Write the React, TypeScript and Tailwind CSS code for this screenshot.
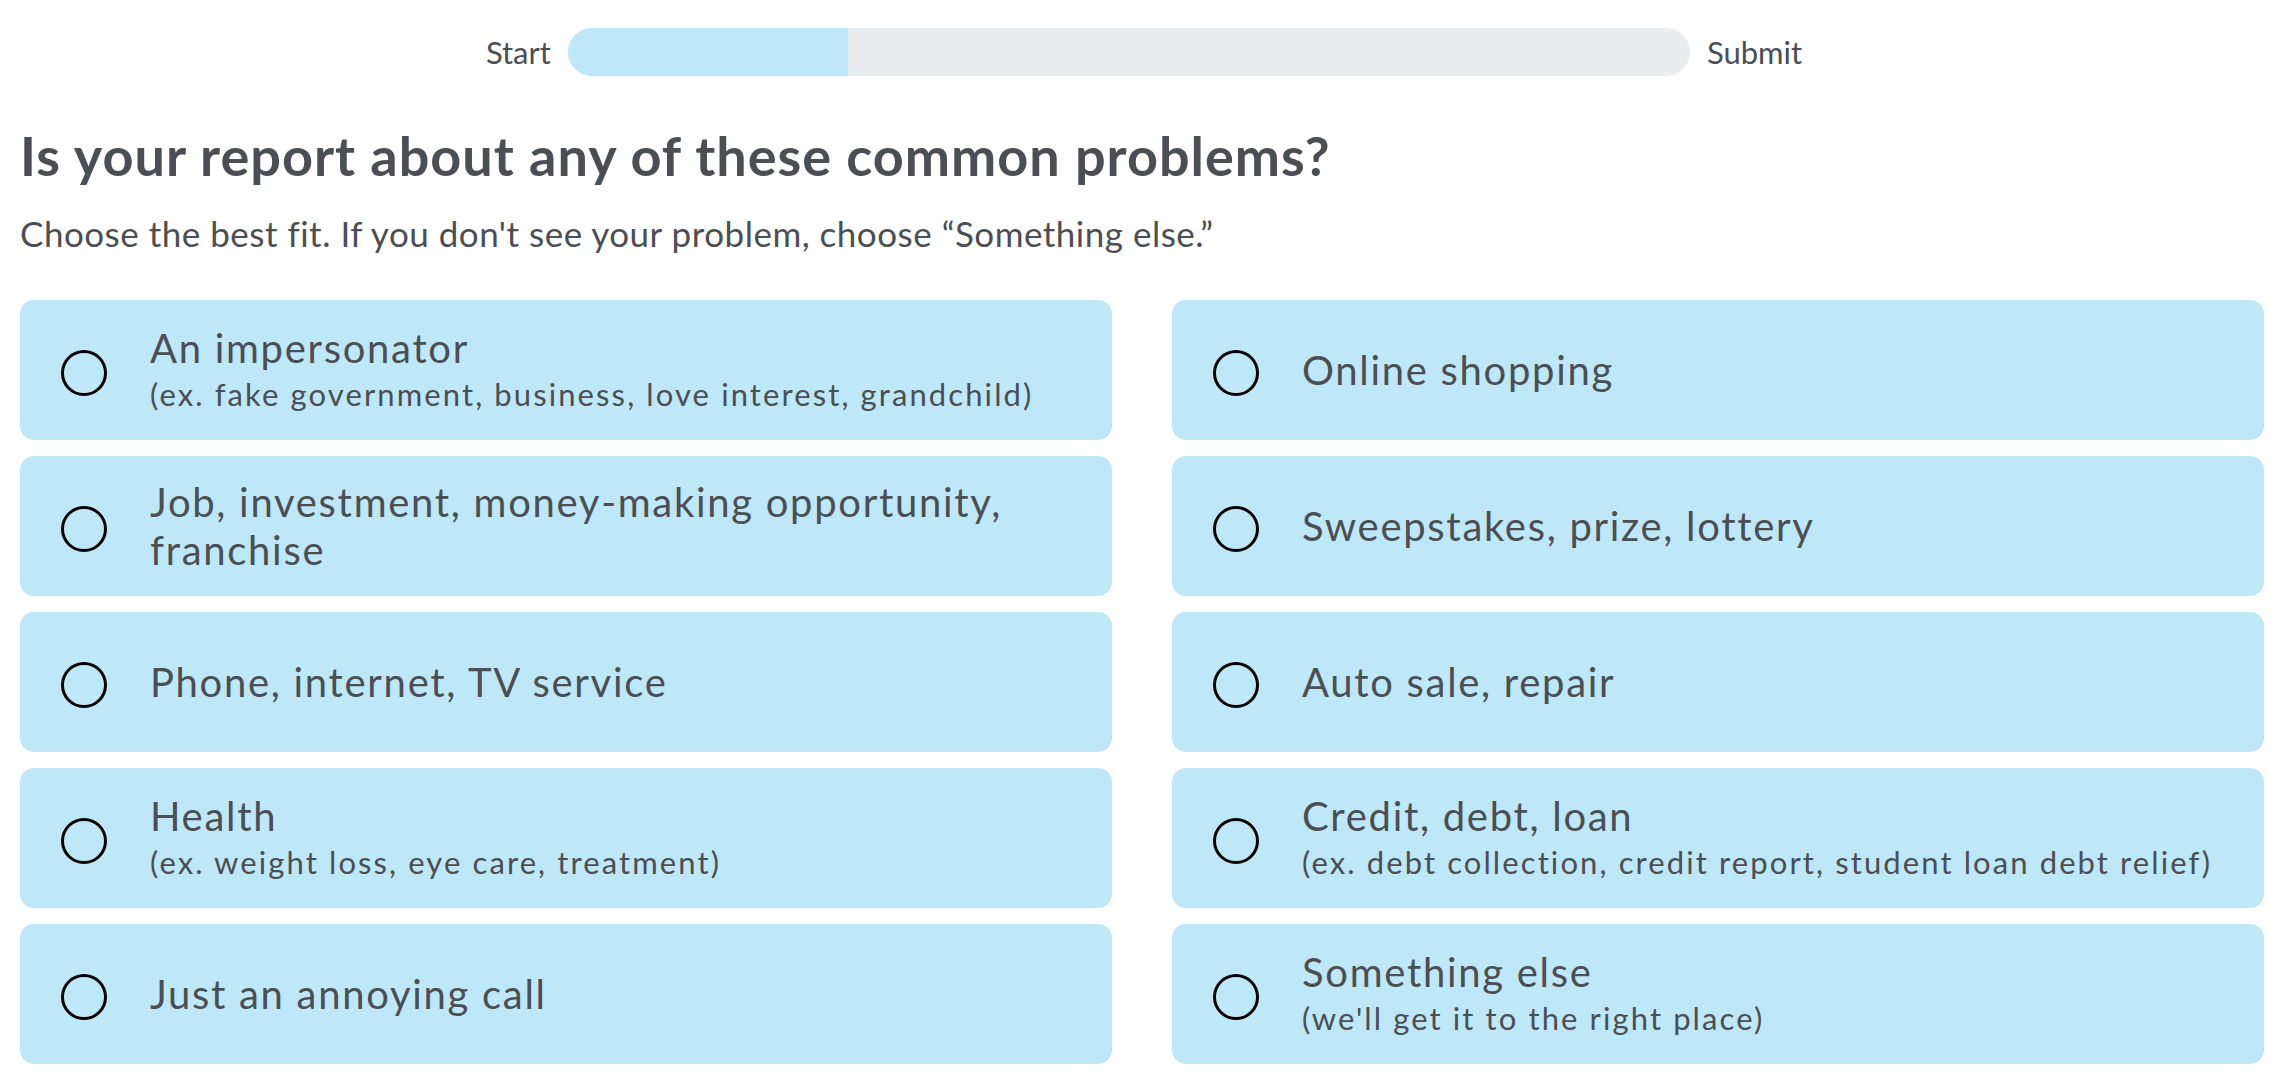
import React from "react";

type Opt = { title: string; sub?: string };

const left: Opt[] = [
  { title: "An impersonator", sub: "(ex. fake government, business, love interest, grandchild)" },
  { title: "Job, investment, money-making opportunity, franchise" },
  { title: "Phone, internet, TV service" },
  { title: "Health", sub: "(ex. weight loss, eye care, treatment)" },
  { title: "Just an annoying call" },
];
const right: Opt[] = [
  { title: "Online shopping" },
  { title: "Sweepstakes, prize, lottery" },
  { title: "Auto sale, repair" },
  { title: "Credit, debt, loan", sub: "(ex. debt collection, credit report, student loan debt relief)" },
  { title: "Something else", sub: "(we'll get it to the right place)" },
];

function Card({ o }: { o: Opt }) {
  return (
    <button className="flex h-[140px] w-full items-center gap-[43px] rounded-[14px] bg-[#bee8f8] pl-[41px] pr-[40px] text-left">
      <span className="mt-[6px] block h-[46px] w-[46px] shrink-0 rounded-full border-[3.5px] border-black" />
      <span className="flex flex-col">
        <span className="text-[40px] leading-[48px] tracking-[1.7px] text-[#4b4e53]">{o.title}</span>
        {o.sub && <span className="text-[31px] leading-[44px] tracking-[2.1px] text-[#4b4e53]">{o.sub}</span>}
      </span>
    </button>
  );
}

export default function App() {
  const rows = left.map((l, i) => [l, right[i]]);
  return (
    <div className="min-h-[1086px] w-full bg-white text-[#4b4e53]" style={{ fontFamily: "Lato, 'Noto Sans', sans-serif" }}>
      <div className="flex items-center justify-center gap-[17px] pt-[28px]">
        <span className="text-[31px] leading-[48px]">Start</span>
        <div className="flex h-[48px] w-[1122px] overflow-hidden rounded-full bg-[#ebecf0]">
          <div className="h-full w-[280px] bg-[#bee8f8]" />
        </div>
        <span className="text-[31px] leading-[48px]">Submit</span>
      </div>
      <h1 className="mt-[48px] pl-[20px] text-[54px] font-bold leading-[1.2] tracking-[1px]">Is your report about any of these common problems?</h1>
      <p className="mt-[23px] pl-[20px] text-[35px] leading-[1.2] tracking-[0.5px]">Choose the best fit. If you don't see your problem, choose “Something else.”</p>
      <div className="mt-[46px] grid grid-cols-2 gap-x-[60px] gap-y-[16px] pl-[20px] pr-[24px]">
        {rows.map(([l, r], i) => (
          <React.Fragment key={i}>
            <Card o={l} />
            <Card o={r} />
          </React.Fragment>
        ))}
      </div>
    </div>
  );
}
